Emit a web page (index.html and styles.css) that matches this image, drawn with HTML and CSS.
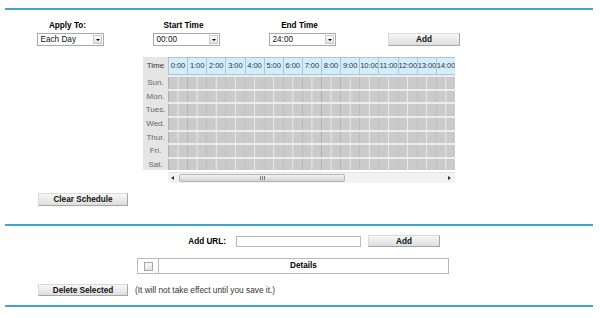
FILE: index.html
```html
<!DOCTYPE html>
<html>
<head>
<meta charset="utf-8">
<title>Schedule</title>
<link rel="stylesheet" href="styles.css">
</head>
<body>
<div class="page">
  <div class="rule rule-top"></div>

  <div class="controls">
    <div class="field">
      <div class="flabel">Apply To:</div>
      <div class="select"><span class="sv">Each Day</span><span class="sarrow"></span></div>
    </div>
    <div class="field">
      <div class="flabel">Start Time</div>
      <div class="select"><span class="sv">00:00</span><span class="sarrow"></span></div>
    </div>
    <div class="field">
      <div class="flabel">End Time</div>
      <div class="select"><span class="sv">24:00</span><span class="sarrow"></span></div>
    </div>
    <button class="btn btn-add">Add</button>
  </div>

  <div class="sched">
    <div class="daycol">
      <div class="dh">Time</div>
      <div class="dl">Sun.</div>
      <div class="dl">Mon.</div>
      <div class="dl">Tues.</div>
      <div class="dl">Wed.</div>
      <div class="dl">Thur.</div>
      <div class="dl">Fri.</div>
      <div class="dl">Sat.</div>
    </div>
    <div class="hours">
      <div class="viewport">
        <div class="hrow">
          <div class="hc">0:00</div><div class="hc">1:00</div><div class="hc">2:00</div><div class="hc">3:00</div>
          <div class="hc">4:00</div><div class="hc">5:00</div><div class="hc">6:00</div><div class="hc">7:00</div>
          <div class="hc">8:00</div><div class="hc">9:00</div><div class="hc">10:00</div><div class="hc">11:00</div>
          <div class="hc">12:00</div><div class="hc">13:00</div><div class="hc">14:00</div>
        </div>
        <div class="grow"></div>
        <div class="grow"></div>
        <div class="grow"></div>
        <div class="grow"></div>
        <div class="grow"></div>
        <div class="grow"></div>
        <div class="grow"></div>
      </div>
      <div class="scrollbar">
        <span class="arr arr-l"></span>
        <span class="thumb"><span class="grip"></span></span>
        <span class="arr arr-r"></span>
      </div>
    </div>
  </div>

  <button class="btn btn-clear">Clear Schedule</button>

  <div class="rule rule-mid"></div>

  <div class="urlrow">
    <label class="url-label">Add URL:</label>
    <input class="url-input" type="text">
    <button class="btn btn-add2">Add</button>
  </div>

  <div class="details">
    <div class="dcheck"><input class="cb" type="checkbox"></div>
    <div class="dtitle">Details</div>
  </div>

  <div class="delrow">
    <button class="btn btn-del">Delete Selected</button>
    <span class="note">(It will not take effect until you save it.)</span>
  </div>

  <div class="rule rule-bottom"></div>
</div>
</body>
</html>
```

FILE: styles.css
```css
html, body {
  margin: 0;
  padding: 0;
  background: #ffffff;
}

body {
  font-family: "Liberation Sans", Arial, sans-serif;
  font-size: 8px;
  color: #000;
}

.page {
  width: 588px;
  padding: 0 7px 0 5px;
}

.rule {
  height: 0;
  border-top: 2px solid #3fa5cc;
}

.rule-top { margin-top: 8px; }
.rule-mid { margin-top: 18px; }
.rule-bottom { margin-top: 9px; }

/* ---------- top controls ---------- */
.controls {
  display: flex;
  align-items: flex-end;
  padding-left: 7px;
  margin-top: 11px;
}

.field {
  width: 116px;
  display: flex;
  flex-direction: column;
  align-items: center;
}

.flabel {
  font-weight: bold;
  font-size: 8.2px;
  line-height: 10px;
  height: 10px;
  padding-right: 5px;
}

.select {
  margin-top: 2px;
  width: 67px;
  height: 13px;
  box-sizing: border-box;
  border: 1px solid #a7abb0;
  background: #fff;
  display: flex;
  align-items: center;
  justify-content: space-between;
  padding: 0 1px 0 3px;
}

.sv {
  line-height: 11px;
  font-size: 8.2px;
  color: #111;
}

.sarrow {
  width: 9px;
  height: 9px;
  box-sizing: border-box;
  border: 1px solid #c9c9c9;
  background: linear-gradient(#fafafa, #e2e2e2);
  position: relative;
}

.sarrow::after {
  content: "";
  position: absolute;
  left: 2px;
  top: 3px;
  border-left: 2px solid transparent;
  border-right: 2px solid transparent;
  border-top: 2px solid #000;
}

.btn {
  font-family: "Liberation Sans", Arial, sans-serif;
  font-size: 8.2px;
  font-weight: bold;
  color: #111;
  height: 13px;
  padding: 0;
  box-sizing: border-box;
  border: 1px solid;
  border-color: #dadada #a5a5a5 #a5a5a5 #dadada;
  background: linear-gradient(#f7f7f7, #dedede);
  line-height: 11px;
  text-align: center;
}

.btn-add {
  width: 72px;
  margin-left: 28px;
}

/* ---------- schedule grid ---------- */
.sched {
  display: grid;
  grid-template-columns: 25px 287px;
  align-items: start;
  margin: 11px 0 0 138px;
}

.daycol {
  background: #e5e5e5;
}

.dh {
  height: 18px;
  line-height: 18px;
  text-align: center;
  color: #333;
}

.dl {
  height: 13.65px;
  box-sizing: border-box;
  padding-top: 2px;
  line-height: 11.65px;
  text-align: center;
  color: #666;
}

.viewport {
  width: 287px;
  overflow: hidden;
}

.hrow {
  display: grid;
  grid-template-columns: repeat(15, 19.133px);
  width: 287px;
  height: 18px;
  box-sizing: border-box;
  border-top: 1px solid #a9c7d6;
  border-bottom: 1px solid #a9c7d6;
  background: #d2eefc;
}

.hc {
  box-sizing: border-box;
  border-left: 1px solid #a9c7d6;
  line-height: 16px;
  text-align: center;
  color: #333;
  font-size: 7.6px;
  white-space: nowrap;
  letter-spacing: -0.1px;
}

.grow {
  width: 287px;
  height: 13.65px;
  box-sizing: border-box;
  border-top: 2px solid #ececec;
  background-color: #cacaca;
  background-image:
    linear-gradient(to right, #b0b0b0 1px, transparent 1px),
    linear-gradient(to right, #ebebeb 1px, transparent 1px);
  background-size: 19.133px 100%, 9.567px 100%;
}

.scrollbar {
  margin-top: 2px;
  height: 10px;
  background: #f2f2f2;
  border-top: 1px solid #e6e6e6;
  display: flex;
  align-items: center;
}

.arr {
  width: 0;
  height: 0;
  border-top: 2px solid transparent;
  border-bottom: 2px solid transparent;
}

.arr-l {
  margin-left: 3px;
  border-right: 3px solid #333;
}

.arr-r {
  margin-left: auto;
  margin-right: 4px;
  border-left: 3px solid #333;
}

.thumb {
  margin-left: 5px;
  width: 166px;
  height: 8px;
  box-sizing: border-box;
  border: 1px solid #b4b4b4;
  border-radius: 2px;
  background: linear-gradient(#f4f4f4, #d2d2d2);
  display: flex;
  align-items: center;
  justify-content: center;
}

.grip {
  width: 5px;
  height: 4px;
  background: repeating-linear-gradient(to right, #7a7a7a 0 1px, transparent 1px 2px);
}

.btn-clear {
  display: block;
  width: 90px;
  margin: 10px 0 0 33px;
}

/* ---------- URL row ---------- */
.urlrow {
  display: flex;
  align-items: center;
  margin-top: 9px;
}

.url-label {
  width: 221px;
  text-align: right;
  font-weight: bold;
  font-size: 8.2px;
  margin-right: 10px;
}

.url-input {
  width: 125px;
  height: 11px;
  box-sizing: border-box;
  border: 1px solid #b9b9b9;
  background: #fff;
  margin: 0 7px 0 0;
  padding: 0;
}

.btn-add2 {
  width: 72px;
  height: 12px;
}

.details {
  display: flex;
  width: 312px;
  height: 16px;
  box-sizing: border-box;
  border: 1px solid #b8b8b8;
  margin: 11px 0 0 132px;
}

.dcheck {
  width: 20px;
  border-right: 1px solid #b8b8b8;
  display: flex;
  align-items: center;
  justify-content: center;
}

.cb {
  appearance: none;
  -webkit-appearance: none;
  width: 9px;
  height: 9px;
  margin: 0;
  box-sizing: border-box;
  border: 1px solid #a8a8a8;
  background: linear-gradient(#fafafa, #e3e3e3);
}

.dtitle {
  flex: 1;
  text-align: center;
  font-weight: bold;
  font-size: 8.2px;
  line-height: 14px;
}

.delrow {
  display: flex;
  align-items: center;
  margin: 10px 0 0 33px;
}

.btn-del {
  width: 90px;
  height: 12px;
  margin-right: 7px;
}

.note {
  color: #333;
  font-size: 8.3px;
}
```
